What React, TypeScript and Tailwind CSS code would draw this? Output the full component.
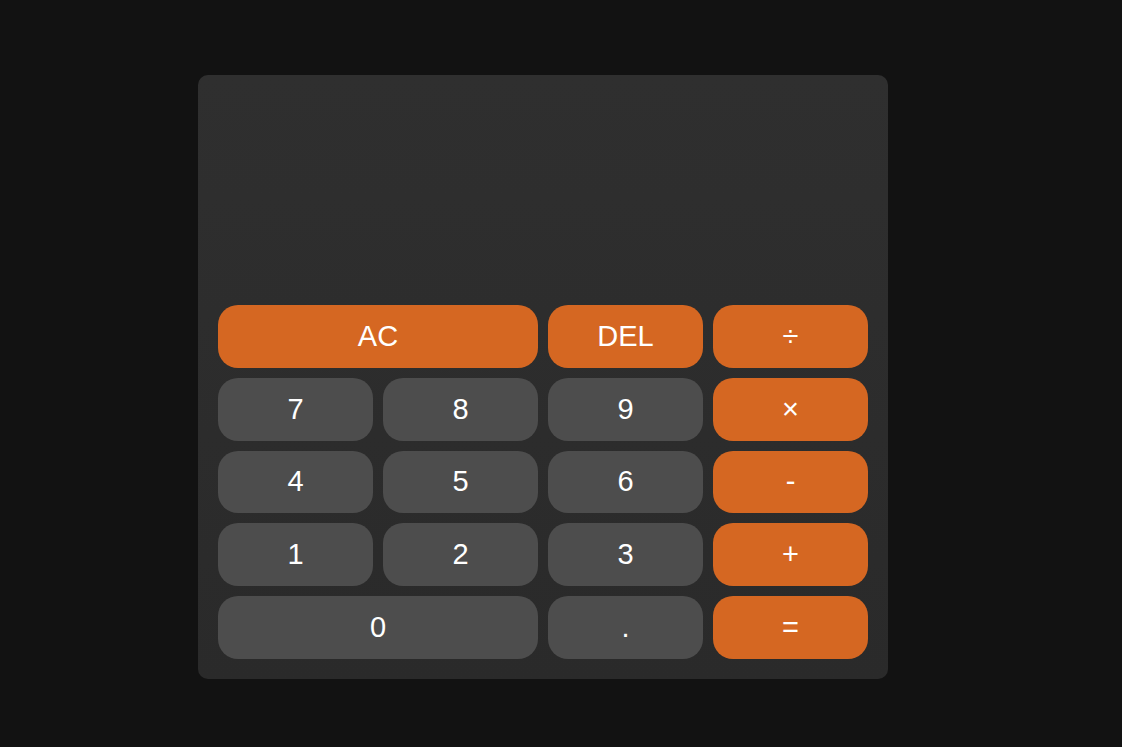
import React from 'react';

type Key = {
  label: string;
  kind: 'op' | 'num';
  wide?: boolean;
};

const keys: Key[] = [
  { label: 'AC', kind: 'op', wide: true },
  { label: 'DEL', kind: 'op' },
  { label: '÷', kind: 'op' },
  { label: '7', kind: 'num' },
  { label: '8', kind: 'num' },
  { label: '9', kind: 'num' },
  { label: '×', kind: 'op' },
  { label: '4', kind: 'num' },
  { label: '5', kind: 'num' },
  { label: '6', kind: 'num' },
  { label: '-', kind: 'op' },
  { label: '1', kind: 'num' },
  { label: '2', kind: 'num' },
  { label: '3', kind: 'num' },
  { label: '+', kind: 'op' },
  { label: '0', kind: 'num', wide: true },
  { label: '.', kind: 'num' },
  { label: '=', kind: 'op' },
];

function App() {
  return (
    <div className="min-h-[747px] w-full bg-[#121212] pl-[198px] pt-[75px] font-['Liberation_Sans',Arial,sans-serif]">
      <div className="flex w-[690px] flex-col gap-[10px] rounded-[10px] bg-gradient-to-b from-[#2f2f2f] to-[#2a2a2a] p-5">
        <div className="h-[200px]" />
        <div className="grid grid-cols-4 gap-[10px]">
          {keys.map((key) => (
            <button
              key={key.label}
              type="button"
              className={`flex h-[62.8px] items-center justify-center rounded-[20px] text-[29px] leading-none text-white ${
                key.wide ? 'col-span-2' : ''
              } ${key.kind === 'op' ? 'bg-[#d56722]' : 'bg-[#4d4d4d]'}`}
            >
              {key.label}
            </button>
          ))}
        </div>
      </div>
    </div>
  );
}

export default App;
